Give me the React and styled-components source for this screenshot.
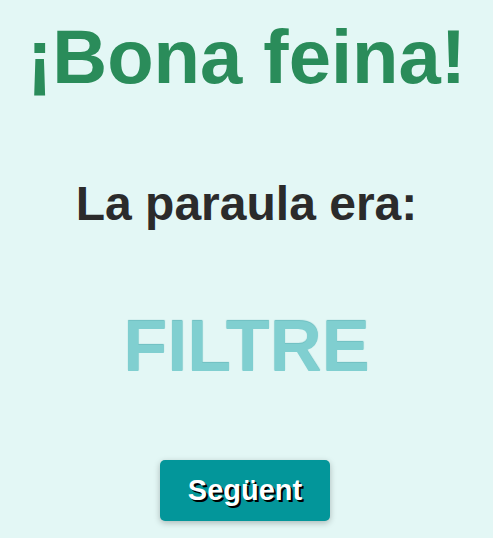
import React from "react";
import styled, { createGlobalStyle } from "styled-components";

const Global = createGlobalStyle`
  html, body { margin: 0; padding: 0; background: #e3f7f5; }
  body { font-family: "Liberation Sans", Arial, sans-serif; }
`;

const Page = styled.main`
  display: flex;
  flex-direction: column;
  align-items: center;
  min-height: 538px;
  box-sizing: border-box;
  padding-top: 19px;
`;

const Title = styled.h1`
  margin: 0;
  font-size: 76px;
  line-height: 1;
  font-weight: 700;
  color: #2a8c5a;
`;

const Label = styled.h2`
  margin: 85px 0 0;
  font-size: 48px;
  line-height: 1;
  font-weight: 700;
  color: #2b2b2b;
`;

const Word = styled.div`
  margin: 82px 0 0;
  font-size: 72px;
  line-height: 1;
  font-weight: 700;
  color: #80cfd0;
  text-shadow: 0 -1px 1px rgba(0, 140, 145, 0.55);
`;

const Button = styled.button`
  margin: 78px 3px 0 0;
  width: 170px;
  height: 61px;
  border: none;
  border-radius: 5px;
  background: #03969a;
  color: #fff;
  font-family: "Liberation Sans", Arial, sans-serif;
  font-weight: 700;
  font-size: 29px;
  text-shadow: 2px 2px 0 #000;
  box-shadow: 0 2px 6px rgba(0, 0, 0, 0.25);
  cursor: pointer;
`;

export default function App() {
  return (
    <>
      <Global />
      <Page>
        <Title>¡Bona feina!</Title>
        <Label>La paraula era:</Label>
        <Word>FILTRE</Word>
        <Button>Següent</Button>
      </Page>
    </>
  );
}
